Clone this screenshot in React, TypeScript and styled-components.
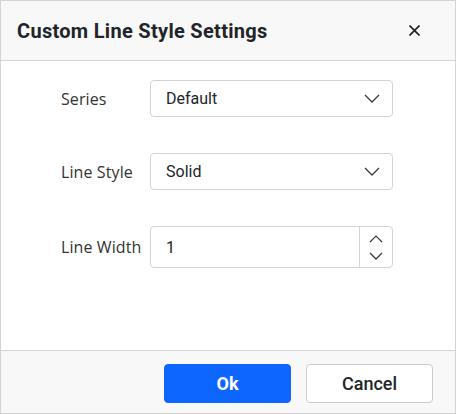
import React from "react";
import styled, { createGlobalStyle } from "styled-components";

const Global = createGlobalStyle`
  html, body { margin: 0; padding: 0; background: #fff; }
  body { font-family: Roboto, "Liberation Sans", sans-serif; }
  * { box-sizing: border-box; }
`;

const Dialog = styled.div`
  width: 456px;
  height: 414px;
  border: 1px solid #d3d3d3;
  display: flex;
  flex-direction: column;
  background: #fff;
`;

const Header = styled.div`
  height: 60px;
  flex: none;
  background: #f8f8f8;
  border-bottom: 1px solid #d6d6d6;
  display: flex;
  align-items: center;
  justify-content: space-between;
  padding: 0 35px 0 16px;
`;

const Title = styled.div`
  font-size: 20px;
  font-weight: 700;
  color: #212529;
  letter-spacing: 0.3px;
`;

const Close = styled.button`
  border: none;
  background: none;
  padding: 0;
  width: 11px;
  height: 11px;
  display: flex;
  align-items: center;
  justify-content: center;
  color: #212529;
`;

const Body = styled.div`
  flex: 1;
  padding: 19px 0 0 60px;
  display: flex;
  flex-direction: column;
  gap: 36px;
`;

const Row = styled.div`
  display: grid;
  grid-template-columns: 89px 243px;
  align-items: center;
`;

const Label = styled.div`
  font-family: "Open Sans", Roboto, sans-serif;
  font-size: 16px;
  color: #333;
  letter-spacing: 0.1px;
`;

const Field = styled.div<{ $h: number }>`
  height: ${(p) => p.$h}px;
  border: 1px solid #cfd4d9;
  border-radius: 4px;
  display: flex;
  align-items: stretch;
  background: #fff;
`;

const Value = styled.div`
  flex: 1;
  display: flex;
  align-items: center;
  padding-left: 15px;
  font-size: 16px;
  color: #212529;
`;

const Chevron = styled.div`
  width: 44px;
  display: flex;
  align-items: center;
  justify-content: center;
  padding-left: 4px;
`;

const Spin = styled.div`
  width: 33px;
  border-left: 1px solid #cfd4d9;
  display: flex;
  flex-direction: column;
  align-items: center;
  justify-content: center;
  gap: 9px;
`;

const Footer = styled.div`
  height: 63px;
  flex: none;
  background: #f8f8f8;
  border-top: 1px solid #d6d6d6;
  display: flex;
  justify-content: flex-end;
  align-items: flex-start;
  gap: 15px;
  padding: 13px 22px 0 0;
`;

const Button = styled.button<{ $primary?: boolean }>`
  width: 127px;
  height: 39px;
  border-radius: 4px;
  font-family: Roboto, "Liberation Sans", sans-serif;
  font-size: 18px;
  font-weight: ${(p) => (p.$primary ? 700 : 500)};
  color: ${(p) => (p.$primary ? "#fff" : "#212529")};
  background: ${(p) => (p.$primary ? "#0d66ff" : "#fff")};
  border: 1px solid ${(p) => (p.$primary ? "#0d66ff" : "#c8cbcf")};
`;

const Down = ({ w = 16, h = 9 }: { w?: number; h?: number }) => (
  <svg width={w} height={h} viewBox={`0 0 ${w} ${h}`}>
    <path d={`M1 1 L${w / 2} ${h - 1} L${w - 1} 1`} fill="none" stroke="#3a3a3a" strokeWidth="1.3" />
  </svg>
);

const Up = ({ w = 14, h = 8 }: { w?: number; h?: number }) => (
  <svg width={w} height={h} viewBox={`0 0 ${w} ${h}`}>
    <path d={`M1 ${h - 1} L${w / 2} 1 L${w - 1} ${h - 1}`} fill="none" stroke="#3a3a3a" strokeWidth="1.2" />
  </svg>
);

export default function App() {
  return (
    <>
      <Global />
      <Dialog>
        <Header>
          <Title>Custom Line Style Settings</Title>
          <Close aria-label="close">
            <svg width="11" height="11" viewBox="0 0 11 11">
              <path d="M0.5 0.5 L10.5 10.5 M10.5 0.5 L0.5 10.5" stroke="#212529" strokeWidth="1.7" />
            </svg>
          </Close>
        </Header>
        <Body>
          <Row>
            <Label>Series</Label>
            <Field $h={37}>
              <Value>Default</Value>
              <Chevron><Down /></Chevron>
            </Field>
          </Row>
          <Row>
            <Label>Line Style</Label>
            <Field $h={37}>
              <Value>Solid</Value>
              <Chevron><Down /></Chevron>
            </Field>
          </Row>
          <Row>
            <Label>Line Width</Label>
            <Field $h={42}>
              <Value>1</Value>
              <Spin>
                <Up />
                <Down w={14} h={8} />
              </Spin>
            </Field>
          </Row>
        </Body>
        <Footer>
          <Button $primary>Ok</Button>
          <Button>Cancel</Button>
        </Footer>
      </Dialog>
    </>
  );
}
